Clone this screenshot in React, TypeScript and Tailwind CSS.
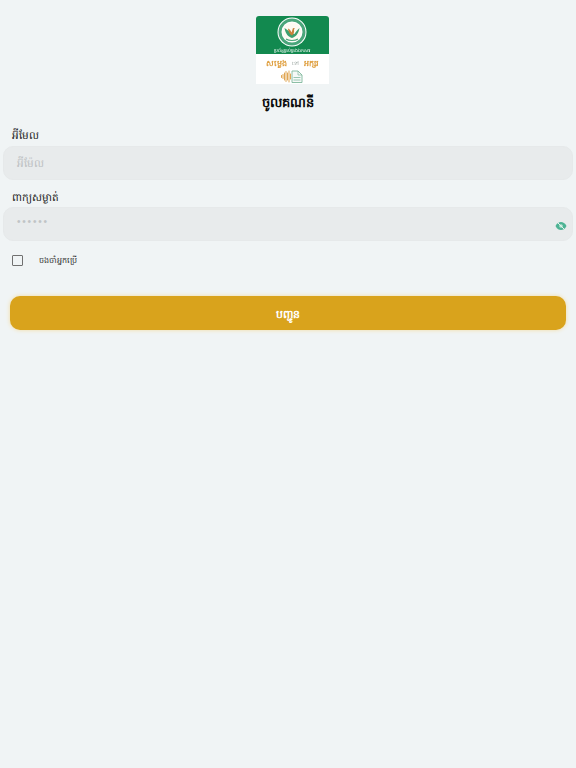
import React from "react";

const khmer = { fontFamily: '"Noto Sans CJK SC", "Noto Sans", "Liberation Sans", sans-serif' };

function Logo() {
  return (
    <div className="ml-[8px] w-[73px] h-[68px] flex flex-col rounded-t-[3px] overflow-hidden bg-white blur-[0.4px]">
      <div className="h-[38px] bg-[#12894f] flex flex-col items-center">
        <svg width="30" height="30" viewBox="0 0 30 30" className="mt-[1px]">
          <circle cx="15" cy="15" r="14.5" fill="#fff" />
          <circle cx="15" cy="15" r="12" fill="none" stroke="#4aa67b" strokeWidth="3" />
          <circle cx="15" cy="15" r="9.5" fill="#fdfaf2" />
          <path d="M7.5 11c1 6 4 9 7.5 10 3.5-1 6.500-4 7.500-10-2 2-4 4-5 6-1-.5-2-.5-3 0-1-2-4-4-7-6z" fill="#3da070" />
          <path d="M11 11.500c2 1 3 2.500 3.500 4l1.500-4.500 2 .5-1 1c.5 3-.5 5-2 6-2-1-4-4-4-7z" fill="#c7813a" />
          <path d="M9 22c3 2 9 2 12 0" stroke="#4aa67b" strokeWidth="1.200" fill="none" />
        </svg>
        <div className="h-[7px] leading-[7px] text-[4.5px] text-white whitespace-nowrap">ប្រព័ន្ធគ្រប់គ្រងឯកសារ</div>
      </div>
      <div className="flex-1 flex flex-col items-center">
        <div className="flex items-center gap-[5px] h-[12px] mt-[3px] font-bold text-[#df9f3f] text-[8px] leading-[12px] whitespace-nowrap">
          <span>សម្លេង</span>
          <span className="text-[5px] font-normal text-[#9aa5a0]">ទៅ</span>
          <span>អក្សរ</span>
        </div>
        <svg width="22" height="13" viewBox="0 0 22 13" className="mt-[1px]">
          <g stroke="#dd9c40" strokeWidth="0.900" strokeLinecap="round">
            <path d="M.5 5.500v2M2 4.500v4M3.500 3v7M5 1.500v10M6.500 3v7M8 1v11M9.500 4v5" />
          </g>
          <path d="M11 1h6l4 4v7.500H11z" fill="#f6f9f7" stroke="#7fb89c" strokeWidth="0.900" />
          <path d="M17 1v4h4" fill="none" stroke="#7fb89c" strokeWidth="0.700" />
          <path d="M12.500 7.500h7M12.500 10h7" stroke="#8fc0a8" strokeWidth="0.900" />
        </svg>
      </div>
    </div>
  );
}

export default function App() {
  return (
    <div className="min-h-[768px] bg-[#f0f4f5] flex flex-col" style={khmer}>
      <div className="flex flex-col items-center pt-[16px]">
        <Logo />
        <div className="mt-[9px] h-[18px] leading-[18px] text-[13px] font-bold text-[#0a0a0a]">ចូលគណនី</div>
      </div>
      <div className="flex flex-col px-[3px] mt-[15px]">
        <label className="pl-[9px] h-[18px] leading-[18px] text-[10.5px] text-[#222]">អ៊ីមែល</label>
        <div className="mt-[2px] h-[34px] rounded-[10px] bg-[#e8ebec] border border-[#e6e9ea] flex items-center pl-[13px] text-[10.5px] text-[#bcc0c2]">
          អ៊ីម៉ែល
        </div>
        <label className="mt-[8px] pl-[9px] h-[18px] leading-[18px] text-[10.5px] text-[#222]">ពាក្យសម្ងាត់</label>
        <div className="mt-[1px] h-[34px] rounded-[10px] bg-[#e8ebec] border border-[#e6e9ea] flex items-center justify-between pl-[13px] pr-[5px]">
          <span className="text-[10px] leading-[10px] tracking-[1.8px] text-[#c0c4c6] font-['Liberation_Sans'] -mt-[5px]">••••••</span>
          <svg width="12" height="10" viewBox="0 0 12 10" className="mt-[3px] blur-[0.4px]">
            <path d="M0.500 5C2 2 4 1 6 1s4 1 5.500 4C10 8 8 9 6 9S2 8 .5 5z" fill="#4db394" />
            <circle cx="6" cy="5" r="1.800" fill="#bfe5d8" />
            <path d="M2.500 1.500l7 7" stroke="#e6f2ee" strokeWidth="1" />
          </svg>
        </div>
        <div className="flex items-center pl-[9px] mt-[12px] h-[14px]">
          <div className="w-[11px] h-[11px] border-[1.5px] border-[#707070] rounded-[1px]" />
          <span className="ml-[16px] text-[8px] text-[#333]">ចងចាំអ្នកប្រើ</span>
        </div>
      </div>
      <div className="px-[10px] mt-[29px]">
        <button className="w-full h-[34px] rounded-[10px] bg-[#d9a31c] text-white text-[11px] font-bold flex items-center justify-center shadow-[0_0_4px_#f3dca0]">
          បញ្ជូន
        </button>
      </div>
    </div>
  );
}
